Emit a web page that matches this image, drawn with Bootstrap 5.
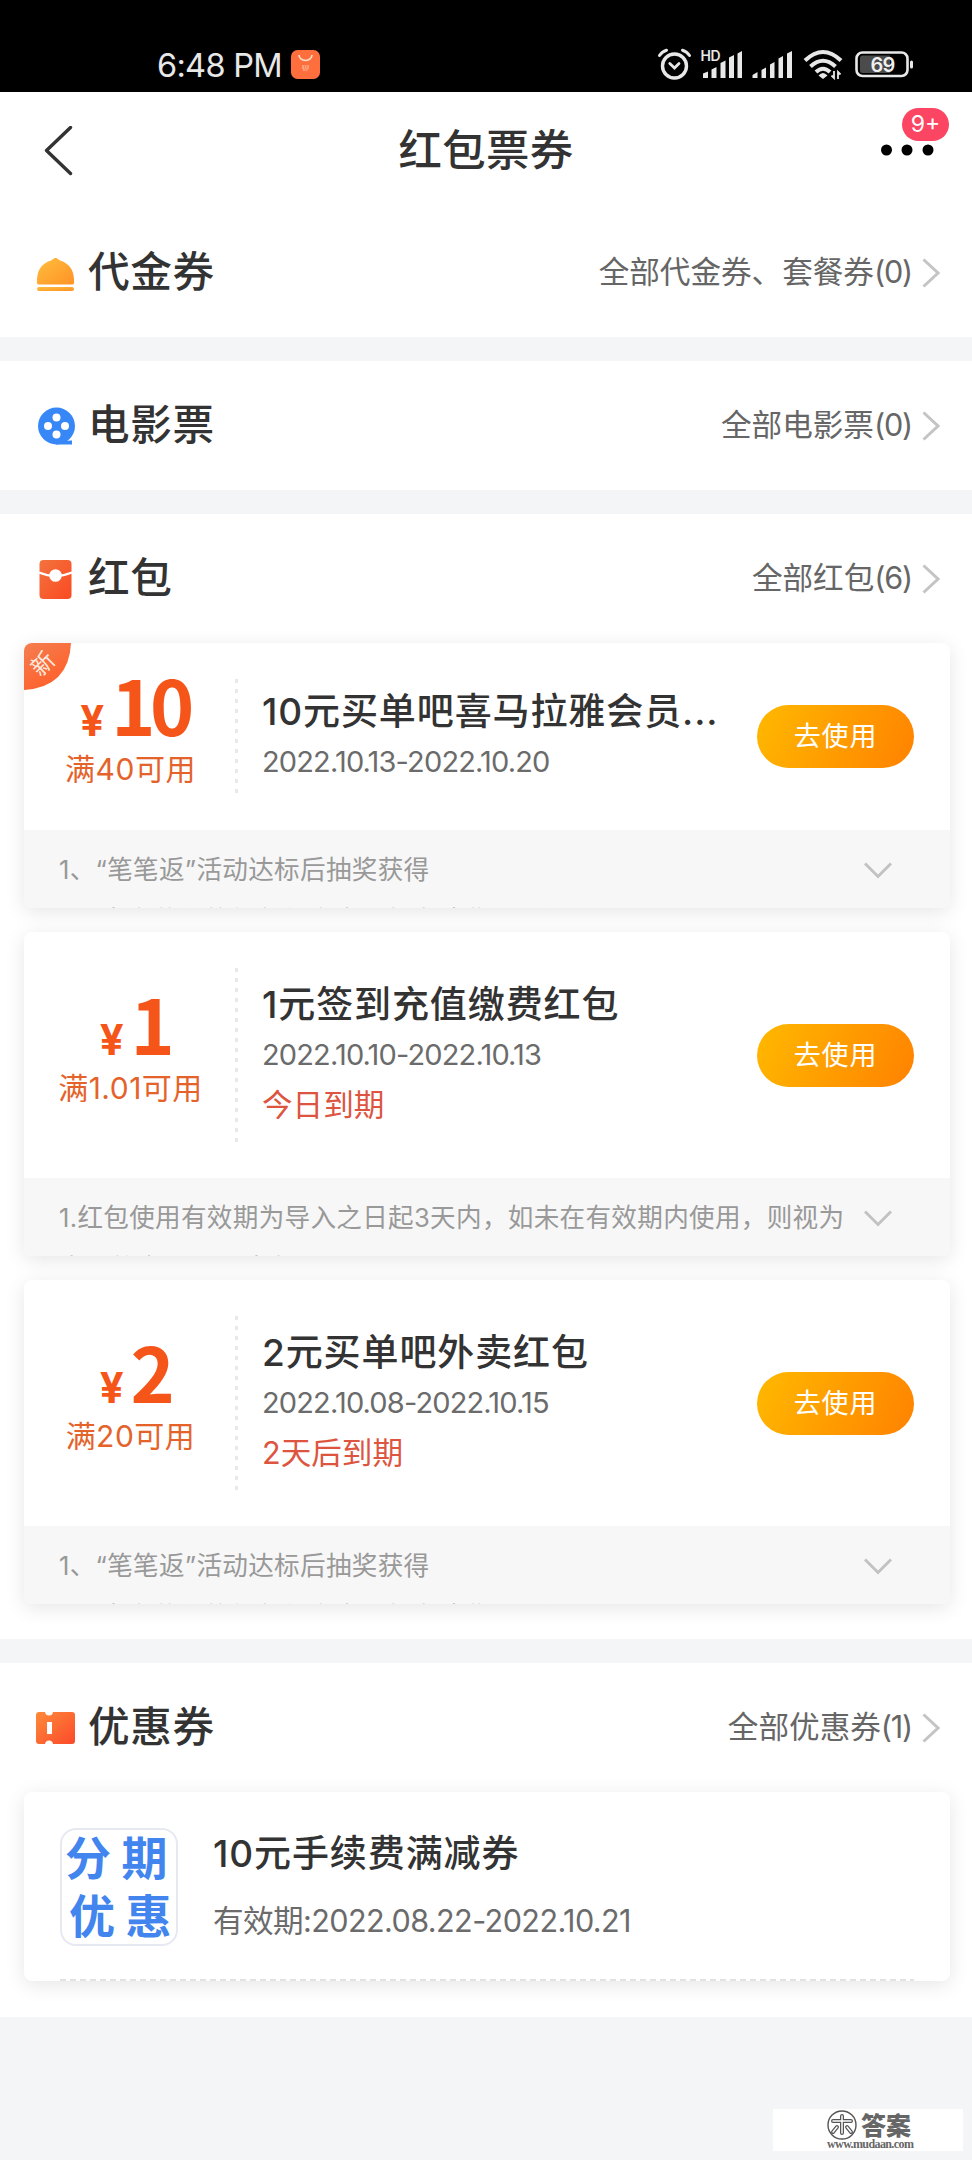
<!DOCTYPE html>
<html lang="zh-CN">
<head>
<meta charset="utf-8">
<meta name="viewport" content="width=device-width, initial-scale=1">
<title>红包票券</title>
<link rel="stylesheet" href="https://cdn.jsdelivr.net/npm/bootstrap@5.3.0/dist/css/bootstrap.min.css">
<style>
  body{font-family:Inter,"Noto Sans CJK SC",sans-serif;color:#333;background:#f4f5f7;width:972px;height:2160px;overflow:hidden;line-height:1}
  svg{display:block;flex:none}
  .statusbar{height:92px;background:#000;color:#e8e8e8;padding:38px 56px 0 157px}
  .clock{font-size:32.5px;line-height:55px;width:134px;letter-spacing:-.7px}
  .app-mark{margin-top:12px}
  .topbar{height:116px;padding:1px 44px 0 44px}
  .topbar h1{font-size:43.4px;font-weight:500;letter-spacing:.4px}
  .msgs{width:64px;height:20px}
  .msgs svg{overflow:visible}
  .msg-count{left:38px;top:-33px;width:47px;height:33px;background:#fb4562;font-size:23px;font-weight:400;line-height:33px;padding:0}
  .panel{background:#fff;margin-bottom:24px}
  .panel-head{height:129px;padding:0 32px 0 35px}
  .panel-head h2{font-size:41.6px;font-weight:500;letter-spacing:.6px;margin-left:11px}
  .more{font-size:30.6px;color:#666;font-weight:400;gap:10px}
  .more .cnt{letter-spacing:-1.2px}
  .sheet{width:926px;border-radius:8px;background:#fff;box-shadow:0 4px 20px rgba(0,0,0,.1);overflow:hidden;margin:0 auto 24px 24px}
  .coupon{height:246px}
  .coupon.short{height:187px}
  .worth{width:211px;padding-left:2px;color:#f6551a}
  .worth-row{height:66px;padding-left:8px;font-family:"Noto Sans CJK SC",sans-serif;font-weight:700;line-height:43px}
  .worth-row .yen{font-family:Inter,sans-serif;font-size:42px;margin-right:7px}
  .worth-row .fig{font-size:75px;letter-spacing:-5.5px}
  .cond{font-size:30px;letter-spacing:.5px;line-height:43px;color:#e4632b}
  .vdash{width:3px;align-self:stretch;margin:36px 24px 34px 0;background:repeating-linear-gradient(#e9e9e9 0 4px,transparent 4px 10px)}
  .info{line-height:50px;white-space:nowrap}
  .name{font-size:37px;font-weight:500;letter-spacing:.9px}
  .date{font-size:29px;color:#6b6b6b;letter-spacing:-.85px}
  .offer-date{font-size:30.6px;letter-spacing:-.6px}
  .due{font-size:30.6px;color:#dd5540}
  .use{width:157px;height:63px;border-radius:32px;background:linear-gradient(115deg,#ffb900,#ff9d00 50%,#ff8200);color:#fff;font-size:27px;letter-spacing:.9px;margin-right:36px;padding:0;border:0;line-height:63px}
  .rules{height:78px;background:#f7f7f7;color:#999;font-size:25.6px;letter-spacing:.3px;line-height:51px;padding:14px 58px 0 35px;overflow:hidden}
  .rules p{margin:0;width:790px;height:64px;overflow:hidden;white-space:nowrap}
  .rules svg{margin-top:18px}
  .thumb{width:118px;height:118px;border:2px solid #e6e8f2;border-radius:16px;margin:0 35px 0 36px;font-family:"Noto Sans CJK SC",sans-serif;font-weight:700;font-size:46px;line-height:58px;color:#4285ee;letter-spacing:10.500px;white-space:nowrap;padding-left:3px}
  .thumb div{margin-top:-4px}
  .thumb .low{padding-left:4px;margin-top:0}
  .offer{height:189px}
  .offer .info{line-height:67px}
  .hdash{left:36px;right:36px;bottom:0;height:2px;background:repeating-linear-gradient(90deg,#e2e2e2 0 6px,transparent 6px 10px)}
  .packets{height:1125px}
  .offers{height:354px}
  .site{left:773px;top:2109px;width:190px;height:42px;background:#fff;color:#666}
  .site b{font-family:"Noto Sans CJK SC",sans-serif;font-weight:900;font-size:25px;line-height:28px}
  .site small{font-family:"Liberation Serif",serif;font-weight:700;font-size:12px;line-height:10px;left:54px;top:30px;letter-spacing:-.6px}
</style>
<script src="https://cdn.jsdelivr.net/npm/bootstrap@5.3.0/dist/js/bootstrap.bundle.min.js"></script>
</head>
<body class="position-relative">

<header class="statusbar d-flex align-items-start">
  <span class="clock text-nowrap">6:48 PM</span>
  <svg class="app-mark" width="30" height="30" viewBox="0 0 30 30"><rect width="29" height="29" rx="6.5" fill="#ff6f3e"/><path d="M8 5a6.5 5.5 0 0 0 13 0" fill="none" stroke="#ffe0c8" stroke-width="1.6"/><path d="M11 16h7M11 18h7M12 20h5" stroke="#ffd2b8" stroke-width="1" stroke-dasharray="2 .6"/></svg>
  <div class="d-flex ms-auto" style="margin-top:10px">
    <svg width="36" height="32" viewBox="0 0 36 32" fill="none" stroke="#e8e8e8" stroke-linecap="round"><circle cx="17.500" cy="18" r="12" stroke-width="3.400"/><path d="M12.800 15.500 17.500 20l4.500-4.500" stroke-width="2.800"/><path d="M2.500 7.500Q5 3.500 9.500 2.200M32.500 7.500Q30 3.500 25.500 2.200" stroke-width="3"/></svg>
    <svg width="44" height="32" viewBox="0 0 44 32" fill="#e8e8e8" class="ms-2"><text x="-.5" y="12.500" font-size="14" font-weight="600" textLength="20">HD</text><path d="M2 25.500l5-2V30H2zM10.500 21.500l5-2.500V30h-5zM19.500 15l5-2.500V30h-5zM28 9.500l5-2.500V30h-5zM36.500 5.500l4.500-2.500V30h-4.500z"/></svg>
    <svg width="44" height="32" viewBox="0 0 44 32" fill="#e8e8e8" style="margin-left:6px"><path d="M1.500 27l5-3V30h-5zM10.500 22l4.500-2.500V30h-4.500zM19 16.500l4.500-2.500V30H19zM27.500 10.500L32 8v22h-4.500zM36 5.500l5-2.500V30h-5z"/></svg>
    <svg width="42" height="32" viewBox="0 0 42 32" fill="none" stroke="#e8e8e8" stroke-width="4" style="margin-left:8px"><path d="M2 12.500Q20-4.500 38 12.500M7.500 18.500Q20 7 32.500 18.500M13 24Q20 17.500 27 24"/><path d="M15.500 27.500Q20 22.500 24.500 27.500L20 31z" fill="#e8e8e8" stroke="none"/><path d="M31 23v7l-2.500-2.500M35 31v-7l2.500 2.500" stroke-width="1.800"/></svg>
    <svg width="62" height="32" viewBox="0 0 62 32" style="margin-left:9px"><rect x="2.500" y="4.500" width="51" height="23.500" rx="6" fill="none" stroke="#e8e8e8" stroke-width="2.600"/><path d="M6 10q0-2.500 2.500-2.500H36V25H8.500Q6 25 6 22.500z" fill="#4b4b4b"/><text x="28.500" y="23.500" font-size="20" font-weight="600" fill="#f0f0f0" text-anchor="middle" letter-spacing="-.8">69</text><rect x="56" y="12.500" width="3" height="8" rx="1.500" fill="#e8e8e8"/></svg>
  </div>
</header>

<main>
<section class="panel">
  <nav class="topbar d-flex align-items-center justify-content-between bg-white">
    <svg width="64" height="50" viewBox="0 0 64 50" fill="none" stroke="#333" stroke-width="3.400" stroke-linecap="round" stroke-linejoin="round"><path d="M26.500 1.500 2.500 24.500 26.500 47.500"/></svg>
    <h1 class="m-0">红包票券</h1>
    <div class="msgs position-relative">
      <svg width="64" height="20" viewBox="0 0 64 20"><circle cx="22.500" cy="9" r="5.500"/><circle cx="43" cy="9" r="5.500"/><circle cx="64" cy="9" r="5.500"/></svg>
      <span class="msg-count badge rounded-pill position-absolute">9+</span>
    </div>
  </nav>
  <div class="panel-head d-flex align-items-center">
    <svg width="42" height="42" viewBox="0 0 42 42"><defs><linearGradient id="gy" x2="1" y2="1"><stop stop-color="#ffbe3e"/><stop offset="1" stop-color="#ff9226"/></linearGradient></defs><path d="M2 31.500Q1 13 16 8.500l3.500-2.500h2L25 8.500Q40 13 39 31.500Q38.500 32.500 37 32.500H4Q2.500 32.500 2 31.500z" fill="url(#gy)"/><rect x="2" y="35" width="37" height="4" rx="2" fill="url(#gy)"/></svg>
    <h2 class="mb-0">代金券</h2>
    <div class="more d-flex align-items-center ms-auto"><span>全部代金券、套餐券<span class="cnt">(0)</span></span>
      <svg width="18" height="30" viewBox="0 0 18 30" fill="none" stroke="#c4c4c4" stroke-width="3"><path d="M1.500 1.500 16 15 1.500 28.500"/></svg></div>
  </div>
</section>

<section class="panel">
  <div class="panel-head d-flex align-items-center">
    <svg width="42" height="42" viewBox="0 0 42 42"><circle cx="21.500" cy="21" r="18.500" fill="#3787f7"/><path d="M21 36h10l4-.5h2v4H21z" fill="#3787f7"/><g fill="#fff"><circle cx="21.500" cy="12.500" r="4"/><circle cx="13" cy="21" r="4"/><circle cx="30" cy="21" r="4"/><circle cx="21.500" cy="29.500" r="4"/></g></svg>
    <h2 class="mb-0">电影票</h2>
    <div class="more d-flex align-items-center ms-auto"><span>全部电影票<span class="cnt">(0)</span></span>
      <svg width="18" height="30" viewBox="0 0 18 30" fill="none" stroke="#c4c4c4" stroke-width="3"><path d="M1.500 1.500 16 15 1.500 28.500"/></svg></div>
  </div>
</section>

<section class="panel packets">
  <div class="panel-head d-flex align-items-center">
    <svg width="42" height="42" viewBox="0 0 42 42"><defs><linearGradient id="gr" x2="1" y2="1"><stop stop-color="#f2733e"/><stop offset="1" stop-color="#fb4a22"/></linearGradient></defs><rect x="4.500" y="2" width="32" height="39" rx="4" fill="url(#gr)"/><path d="M4 14.500q8.500 3.500 16.500 3.500T37 14.500" fill="none" stroke="#fff" stroke-width="2.200"/><circle cx="20.500" cy="17.500" r="6.300" fill="#fff"/></svg>
    <h2 class="mb-0">红包</h2>
    <div class="more d-flex align-items-center ms-auto"><span>全部红包<span class="cnt">(6)</span></span>
      <svg width="18" height="30" viewBox="0 0 18 30" fill="none" stroke="#c4c4c4" stroke-width="3"><path d="M1.500 1.500 16 15 1.500 28.500"/></svg></div>
  </div>

  <article class="sheet position-relative">
    <svg class="position-absolute top-0 start-0" width="48" height="48" viewBox="0 0 48 48"><defs><linearGradient id="gn" y2="1" x2=".6"><stop stop-color="#f47e50"/><stop offset="1" stop-color="#ff5f2a"/></linearGradient></defs><path d="M0 0h47Q45 44 0 47z" fill="url(#gn)"/><text transform="translate(18.500 20.500) rotate(-45)" text-anchor="middle" y="8.500" font-size="23" fill="#ffece0">新</text></svg>
    <div class="coupon short d-flex align-items-center">
      <div class="worth text-center"><div class="worth-row"><span class="yen">¥</span><span class="fig">10</span></div><div class="cond">满40可用</div></div>
      <div class="vdash"></div>
      <div class="info"><div class="name">10元买单吧喜马拉雅会员...</div><div class="date">2022.10.13-2022.10.20</div></div>
      <button class="use btn ms-auto">去使用</button>
    </div>
    <div class="rules d-flex justify-content-between"><p>1、“笔笔返”活动达标后抽奖获得<br>2、本次获得的红包优惠券，每次消费仅限使用一张，不可叠加</p>
      <svg width="28" height="18" viewBox="0 0 28 18" fill="none" stroke="#c2c2c2" stroke-width="3"><path d="M1 1.500 14 14.500 27 1.500"/></svg></div>
  </article>

  <article class="sheet">
    <div class="coupon d-flex align-items-center">
      <div class="worth text-center"><div class="worth-row"><span class="yen">¥</span><span class="fig">1</span></div><div class="cond">满1.01可用</div></div>
      <div class="vdash"></div>
      <div class="info"><div class="name">1元签到充值缴费红包</div><div class="date">2022.10.10-2022.10.13</div><div class="due">今日到期</div></div>
      <button class="use btn ms-auto">去使用</button>
    </div>
    <div class="rules d-flex justify-content-between"><p>1.红包使用有效期为导入之日起3天内，如未在有效期内使用，则视为<br>自动放弃，不予补发</p>
      <svg width="28" height="18" viewBox="0 0 28 18" fill="none" stroke="#c2c2c2" stroke-width="3"><path d="M1 1.500 14 14.500 27 1.500"/></svg></div>
  </article>

  <article class="sheet">
    <div class="coupon d-flex align-items-center">
      <div class="worth text-center"><div class="worth-row"><span class="yen">¥</span><span class="fig">2</span></div><div class="cond">满20可用</div></div>
      <div class="vdash"></div>
      <div class="info"><div class="name">2元买单吧外卖红包</div><div class="date">2022.10.08-2022.10.15</div><div class="due">2天后到期</div></div>
      <button class="use btn ms-auto">去使用</button>
    </div>
    <div class="rules d-flex justify-content-between"><p>1、“笔笔返”活动达标后抽奖获得<br>2、本次获得的红包优惠券，每次消费仅限使用一张，不可叠加</p>
      <svg width="28" height="18" viewBox="0 0 28 18" fill="none" stroke="#c2c2c2" stroke-width="3"><path d="M1 1.500 14 14.500 27 1.500"/></svg></div>
  </article>
</section>

<section class="panel offers">
  <div class="panel-head d-flex align-items-center">
    <svg width="42" height="42" viewBox="0 0 42 42"><defs><linearGradient id="gt" x2="1" y2="1"><stop stop-color="#ff8a3a"/><stop offset="1" stop-color="#fb4a2a"/></linearGradient></defs><path d="M4 5h6q.5 3.500 4 3.500T18 5H37q3 0 3 3v26q0 3-3 3H18q-.5-3.500-4-3.500T10 37H4q-3 0-3-3V8q0-3 3-3z" fill="url(#gt)"/><rect x="12" y="15" width="5" height="12" fill="#fff"/></svg>
    <h2 class="mb-0">优惠券</h2>
    <div class="more d-flex align-items-center ms-auto"><span>全部优惠券<span class="cnt">(1)</span></span>
      <svg width="18" height="30" viewBox="0 0 18 30" fill="none" stroke="#c4c4c4" stroke-width="3"><path d="M1.500 1.500 16 15 1.500 28.500"/></svg></div>
  </div>
  <article class="sheet position-relative">
    <div class="offer d-flex align-items-center">
      <div class="thumb"><div>分期</div><div class="low">优惠</div></div>
      <div class="info"><div class="name">10元手续费满减券</div><div class="date offer-date">有效期:2022.08.22-2022.10.21</div></div>
    </div>
    <div class="hdash position-absolute"></div>
  </article>
</section>
</main>

<div class="site position-absolute">
  <div class="d-flex" style="padding:1px 0 0 54px">
    <svg width="30" height="30" viewBox="0 0 30 30" fill="none" stroke="#555"><circle cx="15" cy="15" r="14" stroke-width="1.400"/><path d="M6 11h18M15 6v17M10 17l-4 5M20 17l4 5" stroke-width="4" stroke-linecap="round"/><path d="M6 11h18M15 6v17M10 17l-4 5M20 17l4 5" stroke="#fff" stroke-width="1.500" stroke-linecap="round"/></svg>
    <b class="ms-1">答案</b>
  </div>
  <small class="position-absolute">www.mudaan.com</small>
</div>
</body>
</html>
